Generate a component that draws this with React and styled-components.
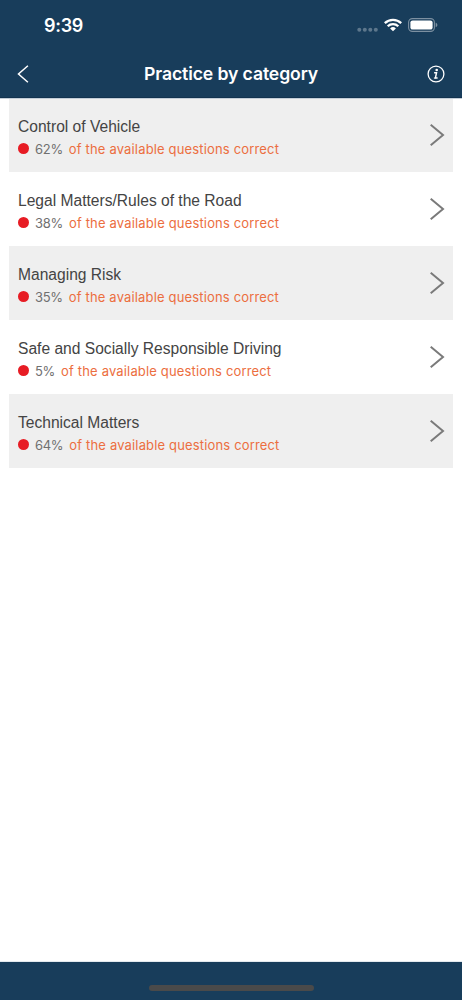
import React from 'react'
import styled, { createGlobalStyle } from 'styled-components'

const GlobalStyle = createGlobalStyle`
    * {
        box-sizing: border-box;
    }
    body {
        margin: 0;
        background: #fff;
    }
`

const Screen = styled.div`
    display: flex;
    flex-direction: column;
    width: 100%;
    height: 100vh;
    overflow: hidden;
    background: #fff;
    font-family: Inter, "Liberation Sans", sans-serif;
`

const Header = styled.header`
    display: flex;
    flex-direction: column;
    flex: none;
    height: 98px;
    background: #183d5b;
    box-shadow: inset 0 -1px #12334f;
    color: #fff;
`

const StatusBar = styled.div`
    display: flex;
    align-items: center;
    justify-content: space-between;
    flex: none;
    height: 50px;
    padding: 0 24px 0 44px;
`

const Time = styled.div`
    padding-top: 1px;
    font-size: 18px;
    font-weight: 600;
    line-height: 24px;
    letter-spacing: -0.3px;
`

const StatusIcons = styled.div`
    display: flex;
    align-items: center;
`

const Gap = styled.span`
    width: ${props => props.$width}px;
`

const NavBar = styled.div`
    display: grid;
    grid-template-columns: 48px 1fr 48px;
    align-items: center;
    flex: none;
    height: 48px;
`

const NavButton = styled.button`
    display: flex;
    justify-content: ${props => (props.$end ? 'flex-end' : 'flex-start')};
    margin: 0;
    padding: 0 17px;
    border: 0;
    background: none;
    color: inherit;

    svg {
        flex: none;
    }
`

const Title = styled.h1`
    margin: 0;
    font-size: 17.6px;
    font-weight: 600;
    line-height: 24px;
    letter-spacing: -0.1px;
    text-align: center;
    white-space: nowrap;
`

const List = styled.main`
    flex: 1;
    padding: 0 9px;
    border-bottom: 1px solid #e3e9ee;
    box-shadow: inset 0 1px #c3ced8;
`

const Row = styled.div`
    display: flex;
    align-items: center;
    justify-content: space-between;
    height: 74px;
    padding: 0 8px 0 9px;
    background: ${props => (props.$shaded ? '#efefef' : '#fff')};

    &:first-child {
        box-shadow: inset 0 1px #c3ced8;
    }
`

const Details = styled.div`
    display: flex;
    flex-direction: column;
    padding-top: 5px;
`

const Name = styled.div`
    color: #444;
    font-family: "Liberation Sans", Arial, sans-serif;
    font-size: 15.6px;
    line-height: 22px;
    white-space: nowrap;
`

const Score = styled.div`
    display: flex;
    align-items: center;
    height: 22px;
    font-size: 13px;
    white-space: nowrap;
`

const Dot = styled.span`
    width: 11px;
    height: 11px;
    margin-right: 6px;
    border-radius: 50%;
    background: #e71c24;
`

const Percent = styled.span`
    margin-right: 6px;
    color: #707070;
    letter-spacing: -0.3px;
`

const Label = styled.span`
    color: #ec6e40;
    letter-spacing: 0.16px;
`

const Footer = styled.footer`
    display: flex;
    align-items: flex-end;
    justify-content: center;
    flex: none;
    height: 38px;
    padding-bottom: 9px;
    background: #183d5b;
`

const HomeIndicator = styled.div`
    width: 165px;
    height: 6px;
    border-radius: 3px;
    background: #4a4a4a;
`

const SignalIcon = () => (
    <svg width="22" height="16" viewBox="0 0 22 16" fill="#5d778c">
        <circle cx="2.3" cy="12.8" r="2" />
        <circle cx="7.8" cy="12.8" r="2" />
        <circle cx="13.3" cy="12.8" r="2" />
        <circle cx="18.8" cy="12.8" r="2" />
    </svg>
)

const WifiIcon = () => (
    <svg width="18" height="14" viewBox="0 0 18 14" fill="none" stroke="#fff" strokeWidth="2.3">
        <path d="M.8 5.1a11.8 11.8 0 0 1 16.4 0" />
        <path d="M3.7 8.3a7.6 7.6 0 0 1 10.6 0" />
        <path d="M9 13.3 6.1 10.5a4.1 4.1 0 0 1 5.8 0z" fill="#fff" stroke="none" />
    </svg>
)

const BatteryIcon = () => (
    <svg width="30" height="14" viewBox="0 0 30 14">
        <rect x=".6" y=".6" width="25.8" height="12.8" rx="3.8" fill="none" stroke="#7c90a1" strokeWidth="1.1" />
        <rect x="2.4" y="2.4" width="22.2" height="9.2" rx="2.2" fill="#fff" />
        <path d="M27.7 4.8c2.2.7 2.2 3.7 0 4.4z" fill="#7c90a1" />
    </svg>
)

const BackIcon = () => (
    <svg width="12" height="18" viewBox="0 0 12 18" fill="none" stroke="#fff" strokeWidth="1.5">
        <path d="M10.9.8 1.5 9l9.4 8.2" />
    </svg>
)

const InfoIcon = () => (
    <svg width="18" height="18" viewBox="0 0 18 18" fill="none" stroke="#fff">
        <circle cx="9" cy="9" r="7.9" strokeWidth="1.3" />
        <circle cx="9.7" cy="5" r="1.3" fill="#fff" stroke="none" />
        <path d="M7.1 7.8h2.4L8.4 12.9h2.2" strokeWidth="1.5" />
        <path d="M6.9 13h1.8" strokeWidth="1" />
    </svg>
)

const ChevronIcon = () => (
    <svg width="16" height="24" viewBox="0 0 16 24" fill="none" stroke="#7a7a7a" strokeWidth="2">
        <path d="M1.7 1.8 14 12 1.7 22.2" />
    </svg>
)

const categories = [
    { name: 'Control of Vehicle', percent: 62 },
    { name: 'Legal Matters/Rules of the Road', percent: 38 },
    { name: 'Managing Risk', percent: 35 },
    { name: 'Safe and Socially Responsible Driving', percent: 5 },
    { name: 'Technical Matters', percent: 64 },
]

const CategoryRow = ({ name, percent, shaded }) => (
    <Row $shaded={shaded}>
        <Details>
            <Name>{name}</Name>
            <Score>
                <Dot />
                <Percent>{`${percent}%`}</Percent>
                <Label>of the available questions correct</Label>
            </Score>
        </Details>
        <ChevronIcon />
    </Row>
)

const App = () => (
    <>
        <GlobalStyle />
        <Screen>
            <Header>
                <StatusBar>
                    <Time>9:39</Time>
                    <StatusIcons>
                        <SignalIcon />
                        <Gap $width={5} />
                        <WifiIcon />
                        <Gap $width={6} />
                        <BatteryIcon />
                    </StatusIcons>
                </StatusBar>
                <NavBar>
                    <NavButton aria-label="Back"><BackIcon /></NavButton>
                    <Title>Practice by category</Title>
                    <NavButton $end aria-label="Information"><InfoIcon /></NavButton>
                </NavBar>
            </Header>
            <List>
                {categories.map((category, i) => (
                    <CategoryRow key={category.name} {...category} shaded={i % 2 === 0} />
                ))}
            </List>
            <Footer>
                <HomeIndicator />
            </Footer>
        </Screen>
    </>
)

export default App
